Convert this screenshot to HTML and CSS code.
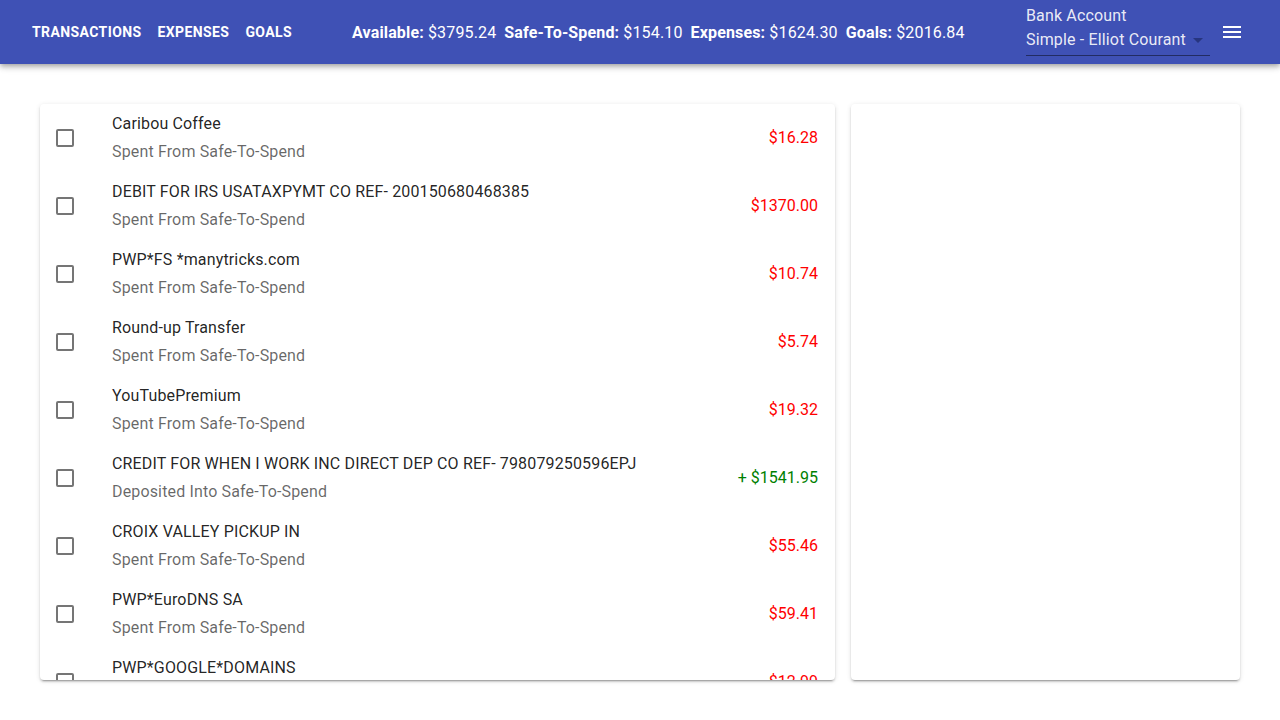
FILE: index.html
```html
<!DOCTYPE html>
<html>
<head>
<meta charset="utf-8">
<link rel="stylesheet" href="styles.css">
</head>
<body>
<header class="appbar">
  <nav class="nav">
    <a class="nav-btn">Transactions</a>
    <a class="nav-btn">Expenses</a>
    <a class="nav-btn">Goals</a>
  </nav>
  <div class="stats">
    <span class="stat"><b>Available:</b> $3795.24</span>
    <span class="stat"><b>Safe-To-Spend:</b> $154.10</span>
    <span class="stat"><b>Expenses:</b> $1624.30</span>
    <span class="stat"><b>Goals:</b> $2016.84</span>
  </div>
  <div class="select">
    <div class="select-label">Bank Account</div>
    <div class="select-value"><span>Simple - Elliot Courant</span><svg class="caret" width="10" height="5" viewBox="0 0 10 5"><path d="M0 0L5 5L10 0Z" fill="#27357f"/></svg></div>
  </div>
  <svg class="menu" width="24" height="24" viewBox="0 0 24 24"><path d="M3 18h18v-2H3v2zm0-5h18v-2H3v2zm0-7v2h18V6H3z" fill="#fff"/></svg>
</header>
<main class="main">
  <section class="card list">
    <div class="row"><span class="cb"></span><div class="txt"><div class="title">Caribou Coffee</div><div class="sub">Spent From Safe-To-Spend</div></div><div class="amt neg">$16.28</div></div>
    <div class="row"><span class="cb"></span><div class="txt"><div class="title">DEBIT FOR IRS USATAXPYMT CO REF- 200150680468385</div><div class="sub">Spent From Safe-To-Spend</div></div><div class="amt neg">$1370.00</div></div>
    <div class="row"><span class="cb"></span><div class="txt"><div class="title">PWP*FS *manytricks.com</div><div class="sub">Spent From Safe-To-Spend</div></div><div class="amt neg">$10.74</div></div>
    <div class="row"><span class="cb"></span><div class="txt"><div class="title">Round-up Transfer</div><div class="sub">Spent From Safe-To-Spend</div></div><div class="amt neg">$5.74</div></div>
    <div class="row"><span class="cb"></span><div class="txt"><div class="title">YouTubePremium</div><div class="sub">Spent From Safe-To-Spend</div></div><div class="amt neg">$19.32</div></div>
    <div class="row"><span class="cb"></span><div class="txt"><div class="title">CREDIT FOR WHEN I WORK INC DIRECT DEP CO REF- 798079250596EPJ</div><div class="sub">Deposited Into Safe-To-Spend</div></div><div class="amt pos">+ $1541.95</div></div>
    <div class="row"><span class="cb"></span><div class="txt"><div class="title">CROIX VALLEY PICKUP IN</div><div class="sub">Spent From Safe-To-Spend</div></div><div class="amt neg">$55.46</div></div>
    <div class="row"><span class="cb"></span><div class="txt"><div class="title">PWP*EuroDNS SA</div><div class="sub">Spent From Safe-To-Spend</div></div><div class="amt neg">$59.41</div></div>
    <div class="row"><span class="cb"></span><div class="txt"><div class="title">PWP*GOOGLE*DOMAINS</div><div class="sub">Spent From Safe-To-Spend</div></div><div class="amt neg">$12.99</div></div>
  </section>
  <section class="card detail"></section>
</main>
</body>
</html>
```

FILE: styles.css
```css
* { box-sizing: border-box; }
html, body { margin: 0; padding: 0; }
body {
  font-family: Roboto, "Liberation Sans", Arial, sans-serif;
  background: #fff;
  color: rgba(0,0,0,0.87);
  height: 720px;
  overflow: hidden;
  letter-spacing: 0.15px;
}
.appbar {
  height: 64px;
  background: #3f51b5;
  color: #fff;
  display: flex;
  align-items: center;
  padding: 0 36px 0 32px;
  box-shadow: 0 2px 4px -1px rgba(0,0,0,0.2), 0 4px 5px 0 rgba(0,0,0,0.14), 0 1px 10px 0 rgba(0,0,0,0.12);
  position: relative;
  z-index: 2;
}
.nav { display: flex; gap: 16px; }
.nav-btn {
  font-size: 14px;
  font-weight: 700;
  text-transform: uppercase;
  letter-spacing: 0.4px;
  color: #fff;
}
.stats {
  display: flex;
  gap: 8px;
  margin-left: 60px;
  font-size: 16px;
}
.stat b { font-weight: 700; }
.select {
  margin-left: auto;
  width: 184px;
  display: flex;
  flex-direction: column;
  margin-top: -1px;
}
.select-label {
  font-size: 16px;
  color: rgba(255,255,255,0.9);
  line-height: 18px;
}
.select-value {
  display: flex;
  align-items: center;
  justify-content: space-between;
  font-size: 16px;
  line-height: 20px;
  color: rgba(255,255,255,0.9);
  padding: 5px 0 5px;
  border-bottom: 1px solid rgba(0,0,0,0.45);
}
.caret { margin-right: 7px; }
.menu { margin-left: 10px; }
.main {
  display: grid;
  grid-template-columns: 795px 389px;
  gap: 16px;
  padding: 40px 40px 0;
}
.card {
  background: #fff;
  border-radius: 4px;
  height: 576px;
  box-shadow: 0 3px 1px -2px rgba(0,0,0,0.2), 0 2px 2px 0 rgba(0,0,0,0.14), 0 1px 5px 0 rgba(0,0,0,0.12);
  overflow: hidden;
}
.row {
  display: flex;
  align-items: center;
  height: 68px;
  padding: 0 17px 0 16px;
}
.cb {
  width: 18px;
  height: 18px;
  border: 2px solid rgba(0,0,0,0.54);
  border-radius: 2px;
  flex: none;
}
.txt {
  margin-left: 38px;
  flex: 1;
}
.title {
  font-size: 16px;
  line-height: 22px;
  color: rgba(0,0,0,0.87);
}
.sub {
  font-size: 16px;
  line-height: 22px;
  margin-top: 6px;
  color: rgba(0,0,0,0.6);
}
.amt {
  font-size: 16px;
  letter-spacing: 0;
  margin-bottom: 2px;
}
.neg { color: #ff0000; }
.pos { color: #008000; }
```
